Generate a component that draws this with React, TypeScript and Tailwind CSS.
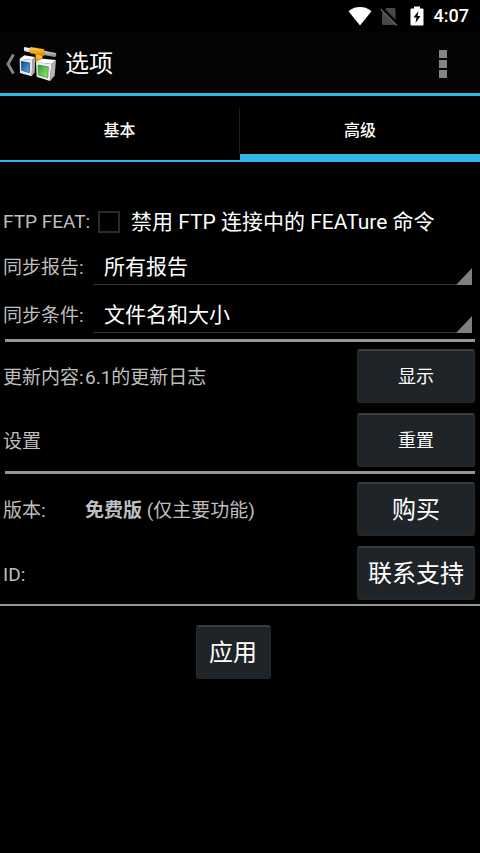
import React, { useState } from "react";

const buttonBase =
  "h-[54px] rounded-[3px] border border-[#24292c] border-t-2 border-t-[#3a3d3f] bg-[#1f2428] text-white";

const tabs = [
  { id: "basic", label: "基本" },
  { id: "advanced", label: "高级" },
];

const StatusBar = () => (
  <div className="flex h-8 items-center justify-end bg-black pr-[11px]">
    <svg width="24" height="20" viewBox="0 0 24 20" aria-hidden="true">
      <path d="M12 19.5 0.5 5.2C3.6 2.6 7.5 1 12 1s8.400 1.600 11.500 4.200z" fill="#fff" />
    </svg>
    <svg className="ml-2" width="18" height="20" viewBox="0 0 18 20" aria-hidden="true">
      <path d="M6.500 2H14a1.500 1.500 0 0 1 1.500 1.500V19H3.500a1.500 1.500 0 0 1-1.500-1.500V6z" fill="#484848" />
      <path d="M1.500 1.500 18 18" stroke="#000" strokeWidth="2.500" />
      <path d="M0.500 3 17 19.500" stroke="#5c5c5c" strokeWidth="1.500" />
    </svg>
    <svg className="ml-3" width="14" height="20" viewBox="0 0 14 20" aria-hidden="true">
      <path d="M4 0.500h6V2.500h2.500a1 1 0 0 1 1 1V18.500a1 1 0 0 1-1 1H1.500a1 1 0 0 1-1-1V3.500a1 1 0 0 1 1-1H4z" fill="#fff" />
      <path d="M8.500 5 3.500 11.500h3L5.500 17l5-7H7.500z" fill="#000" />
    </svg>
    <span className="ml-2.5 text-lg font-medium text-white">4:07</span>
  </div>
);

const AppLogo = () => (
  <svg width="40" height="36" viewBox="0 0 120 108" aria-hidden="true">
    <defs>
      <linearGradient id="pipe" x1="0" y1="0" x2="0" y2="1">
        <stop offset="0.2" stopColor="#f4f4f4" />
        <stop offset="1" stopColor="#777" />
      </linearGradient>
      <linearGradient id="gold" x1="0" y1="0" x2="0" y2="1">
        <stop offset="0" stopColor="#ffdc55" />
        <stop offset="0.5" stopColor="#f7a818" />
        <stop offset="1" stopColor="#d98800" />
      </linearGradient>
      <linearGradient id="blueScreen" x1="0" y1="0" x2="1" y2="1">
        <stop offset="0" stopColor="#0e4594" />
        <stop offset="1" stopColor="#58b4ea" />
      </linearGradient>
      <linearGradient id="greenScreen" x1="0" y1="0" x2="1" y2="1">
        <stop offset="0" stopColor="#2a9a2c" />
        <stop offset="1" stopColor="#a4ee78" />
      </linearGradient>
    </defs>

    {/* left box */}
    <path d="m2 38 14-10 32 5-8 9z" fill="#fff" />
    <path d="m40 42 9-9-2 46-9 12z" fill="#a9a9a9" />
    <path d="m2 38 38 4-2 49-35-10z" fill="#ececec" />
    <path d="m7 46 25 5-1 29-23-7z" fill="url(#blueScreen)" stroke="#174477" strokeWidth="2" />

    {/* pipe and its joint */}
    <path d="M16 3q-3 6 0 13l93 18q5-6 2-13z" fill="url(#pipe)" />
    <path d="M50 24h20v24q-10 6-20 0z" fill="url(#gold)" stroke="#ad6f00" strokeWidth="1" />
    <path d="m34 3 41 7q5 9 0 20l-41-8q-4-9 0-19z" fill="url(#gold)" stroke="#ad6f00" strokeWidth="1" />

    {/* right box */}
    <path d="m51 48 20-10 40 4-14 12z" fill="#fff" />
    <path d="m97 54 14-12-4 47-14 16z" fill="#b4b4b4" />
    <path d="m51 48 46 6-4 51-40-13z" fill="#eee" />
    <path d="m57 57 31 6-2 32-28-8z" fill="url(#greenScreen)" stroke="#22832a" strokeWidth="2" />
  </svg>
);

const Header = () => (
  <header className="flex h-16 items-center border-b-[3px] border-[#33b5e5] bg-[#040404] pt-[3px]">
    <a href="#back" aria-label="返回" className="flex items-center pl-[5px]">
      <svg className="mr-1" width="10" height="22" viewBox="0 0 10 22" aria-hidden="true">
        <path d="M8.500 1.500 3 11 8.500 20.500" fill="none" stroke="#858585" strokeWidth="3" />
      </svg>
      <AppLogo />
    </a>
    <h1 className="ml-1.5 text-2xl text-white">选项</h1>
    <button aria-label="更多选项" className="mr-[33px] ml-auto flex flex-col gap-[2px]">
      <span className="size-2 bg-[#858585]" />
      <span className="size-2 bg-[#858585]" />
      <span className="size-2 bg-[#858585]" />
    </button>
  </header>
);

const Spinner = ({
  id,
  label,
  options,
}: {
  id: string;
  label: string;
  options: string[];
}) => (
  <div className="flex h-12 items-center pr-2 pl-[3px]">
    <label htmlFor={id} className="w-[90px] pt-[2px] text-[19px] whitespace-nowrap">
      {label}
    </label>
    <div className="relative flex-1">
      <select
        id={id}
        className="block h-9 w-full appearance-none border-b border-[#333333] bg-black pl-[11px] text-[21px] leading-8 text-white outline-none"
      >
        {options.map((option) => (
          <option key={option}>{option}</option>
        ))}
      </select>
      <svg
        className="pointer-events-none absolute right-0 bottom-0"
        width="16"
        height="17"
        viewBox="0 0 16 17"
        aria-hidden="true"
      >
        <path d="M16 0v17H0z" fill="#808080" />
      </svg>
    </div>
  </div>
);

const InfoRow = ({
  label,
  action,
  large,
  children,
}: {
  label: string;
  action: string;
  large?: boolean;
  children?: React.ReactNode;
}) => (
  <div className="flex items-center pr-[5px] pl-[3px]">
    <span className="w-[82px] pt-1 whitespace-nowrap">{label}</span>
    <span className="flex-1 pt-1">{children}</span>
    <button className={`${buttonBase} w-[118px] ${large ? "text-2xl" : "text-lg"}`}>
      {action}
    </button>
  </div>
);

const App = () => {
  const [activeTab, setActiveTab] = useState("advanced");

  return (
    <div className="min-h-screen bg-black font-[Roboto,'Noto_Sans_CJK_SC',sans-serif] text-[#bebebe]">
      <StatusBar />
      <Header />

      <div role="tablist" className="grid h-[66px] grid-cols-2">
        {tabs.map((tab) => (
          <button
            key={tab.id}
            role="tab"
            aria-selected={activeTab === tab.id}
            onClick={() => setActiveTab(tab.id)}
            className="group flex flex-col text-base font-medium text-white"
          >
            <span className="mt-3 flex h-[46px] w-full items-center justify-center border-r border-[#1c1c1c] group-last:border-r-0">
              {tab.label}
            </span>
            <span
              className={
                activeTab === tab.id
                  ? "mt-auto h-2 w-full bg-[#33b5e5]"
                  : "mt-auto h-[2px] w-full bg-[#33b5e5]"
              }
            />
          </button>
        ))}
      </div>

      <main className="pt-[38px]">
        <div className="flex h-[43px] items-center pl-[3px]">
          <span className="w-[95px] pt-[2px] text-[19px] whitespace-nowrap">FTP FEAT:</span>
          <input
            id="feat"
            type="checkbox"
            className="size-[22px] appearance-none border-2 border-[#2a2a2a] bg-black checked:bg-[#33b5e5]"
          />
          <label htmlFor="feat" className="ml-[11px] pt-[2px] text-[21px] whitespace-nowrap text-white">
            禁用 FTP 连接中的 FEATure 命令
          </label>
        </div>
        <Spinner id="report" label="同步报告:" options={["所有报告"]} />
        <Spinner id="condition" label="同步条件:" options={["文件名和大小"]} />

        <hr className="mx-[5px] h-[3px] border-0 bg-[#949694]" />
        <section className="flex flex-col gap-2.5 pt-[7px] pb-1 text-[19px]">
          <InfoRow label="更新内容:" action="显示">
            6.1的更新日志
          </InfoRow>
          <InfoRow label="设置" action="重置" />
        </section>

        <hr className="mx-[5px] h-[3px] border-0 bg-[#949694]" />
        <section className="flex flex-col gap-2.5 pt-2 pb-1 text-[19px]">
          <InfoRow label="版本:" action="购买" large>
            <b>免费版</b> (仅主要功能)
          </InfoRow>
          <InfoRow label="ID:" action="联系支持" large />
        </section>

        <hr className="h-[2px] border-0 bg-[#949694]" />
        <div className="flex justify-center pt-[19px] pr-3.5">
          <button className={`${buttonBase} w-[75px] text-2xl`}>应用</button>
        </div>
      </main>
    </div>
  );
};

export default App;
